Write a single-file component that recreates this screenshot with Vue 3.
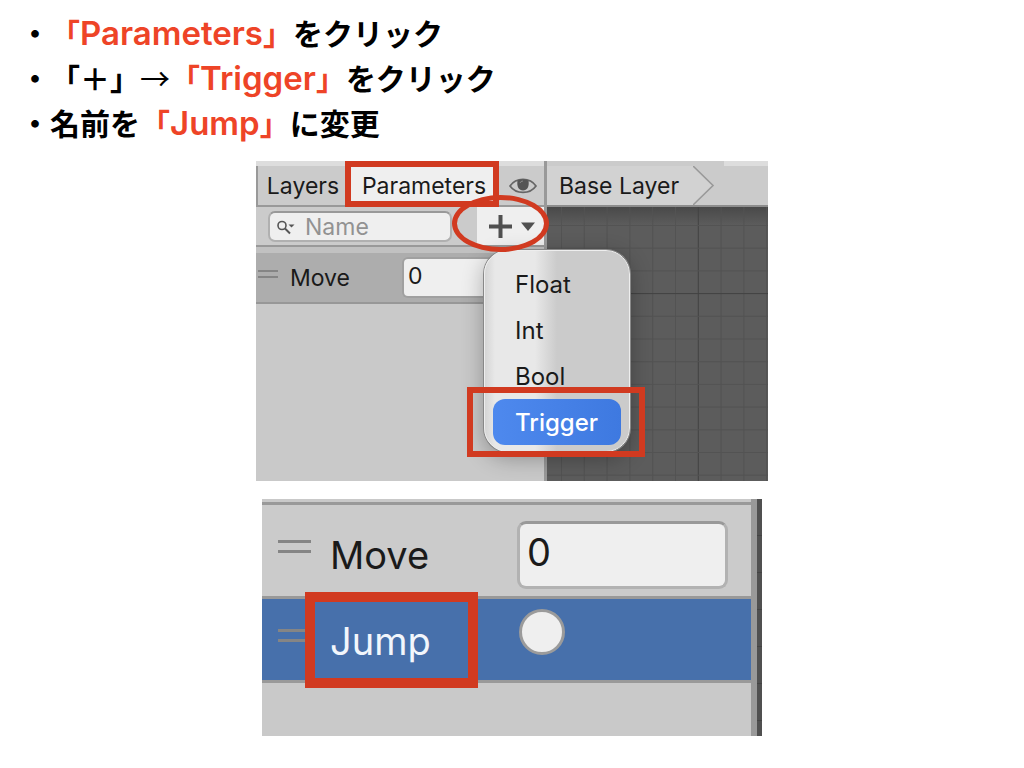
<script setup>
import { ref } from 'vue'

const filter = ref('')
const move = ref('0')
const moveLarge = ref('0')
const jump = ref(false)
const types = ['Float', 'Int', 'Bool', 'Trigger']
const columns = Array.from({ length: 10 }, (_, i) => ({ at: 14.5 + i * 22.8, major: i === 6 }))
const rows = Array.from({ length: 12 }, (_, i) => ({ at: 18.5 + i * 22.7, major: i === 3 }))
</script>

<template>
  <main class="slide">
    <ul class="steps">
      <li>・<em>「<b>Parameters</b>」</em>をクリック</li>
      <li>・「＋」<span class="arrow">→</span><em>「<b>Trigger</b>」</em>をクリック</li>
      <li>・名前を<em>「<b>Jump</b>」</em>に変更</li>
    </ul>

    <section class="editor">
      <div class="side">
        <div class="strip"></div>
        <div class="tabs">
          <button class="tab" type="button">Layers</button>
          <button class="tab active" type="button">Parameters</button>
          <button class="eye" type="button" aria-label="Visibility">
            <svg width="28" height="18" viewBox="0 0 28 18">
              <path d="M1 9C7 .2 21 .2 27 9C21 17.500 7 17.500 1 9Z" fill="none" stroke="#666" stroke-width="1.700" />
              <path d="M8.500 3.500C11 2 17 2 19.500 3.500C20.500 10 18 13.500 14 13.500S7.500 10 8.500 3.500Z" fill="#555" />
              <path d="M11 6Q11.500 4 14 4" fill="none" stroke="#888" stroke-width="1" />
            </svg>
          </button>
        </div>
        <div class="tools">
          <label class="search">
            <svg width="20" height="16" viewBox="0 0 20 16" fill="none" stroke="#555" stroke-width="1.600">
              <circle cx="6" cy="6.500" r="4" />
              <path d="M9 9.500l5 5" stroke-width="2" />
              <path d="M12.500 5.500h6l-3 3z" fill="#555" stroke="none" />
            </svg>
            <input v-model="filter" type="text" placeholder="Name" aria-label="Name" />
          </label>
          <button class="add" type="button" aria-label="Add parameter">
            <svg width="66" height="38" viewBox="0 0 66 38">
              <path d="M12 19.500h23M23.500 8v23" stroke="#505050" stroke-width="4" />
              <path d="M44 15.500h14l-7 8.500z" fill="#505050" />
            </svg>
          </button>
        </div>
        <div class="row">
          <span class="grip"></span>
          <label for="move-value">Move</label>
          <input id="move-value" v-model="move" type="text" />
        </div>
      </div>
      <div class="graph">
        <div class="crumbs">
          <a href="#">Base Layer</a>
          <svg width="22" height="40" viewBox="0 0 22 40">
            <path d="M0 0L20 19.500L0 39V0Z" fill="#d2d2d2" />
            <path d="M0 0L20 19.500L0 39" fill="none" stroke="#999" stroke-width="1.600" />
          </svg>
        </div>
        <svg class="canvas" aria-hidden="true">
          <line v-for="c in columns" :key="c.at" :x1="c.at" :x2="c.at" y1="0" y2="100%" :class="{ major: c.major }" />
          <line v-for="r in rows" :key="r.at" :y1="r.at" :y2="r.at" x1="0" x2="100%" :class="{ major: r.major }" />
        </svg>
      </div>

      <div class="menu" role="menu">
        <button v-for="t in types" :key="t" type="button" role="menuitem" :class="{ chosen: t === 'Trigger' }">{{ t }}</button>
      </div>
      <div class="mark mark-tab"></div>
      <div class="mark mark-add"></div>
      <div class="mark mark-trigger"></div>
    </section>

    <section class="result">
      <div class="list">
        <div class="item">
          <span class="grip"></span>
          <label for="move-large">Move</label>
          <input id="move-large" v-model="moveLarge" type="text" />
        </div>
        <div class="item selected">
          <span class="grip"></span>
          <label for="jump-value">Jump</label>
          <input id="jump-value" v-model="jump" type="radio" :value="true" />
        </div>
      </div>
      <div class="edge"></div>
      <div class="mark mark-jump"></div>
    </section>
  </main>
</template>

<style>
body {
  margin: 0;
  background: #fff;
}
</style>

<style scoped>
* {
  box-sizing: border-box;
}
button,
input {
  margin: 0;
  padding: 0;
  border: 0;
  background: none;
  color: inherit;
  font: inherit;
  outline: none;
}
svg {
  display: block;
}
.slide {
  display: flex;
  flex-direction: column;
  align-items: center;
  color: #1a1a1a;
  font-family: Inter, "Noto Sans CJK JP", sans-serif;
}
.steps {
  align-self: stretch;
  margin: 0;
  padding: 10px 20px 16px;
  list-style: none;
  color: #000;
  font: 700 30px/45px "Noto Sans CJK JP", sans-serif;
  text-spacing-trim: space-all;
}
.steps em {
  color: #ee4427;
  font-style: normal;
}
.steps b {
  font-family: Inter, sans-serif;
  font-size: 33px;
  font-weight: 600;
  line-height: 1;
}
.arrow {
  font-weight: 400;
}
.editor {
  position: relative;
  display: grid;
  grid-template-columns: 291px 1fr;
  width: 100%;
  max-width: 512px;
  min-height: 320px;
  overflow: hidden;
  background: #c9c9c9;
  font-size: 23px;
}
.side {
  border-right: 3px solid #999;
  background: #c9c9c9;
}
.strip {
  height: 5px;
  background: #ddd;
}
.tabs {
  display: flex;
  height: 41px;
  border-bottom: 2px solid #999;
  border-left: 2px solid #999;
  background: #cbcbcb;
}
.tab {
  width: 88px;
  padding-left: 2px;
}
.tab.active {
  width: 152px;
  padding-left: 4px;
  background: #efefef;
}
.eye {
  display: grid;
  flex: 1;
  place-items: center;
  padding-left: 4px;
}
.tools {
  display: flex;
  justify-content: space-between;
  height: 40px;
  padding-left: 12px;
  border-bottom: 2px solid #999;
  background: #cbcbcb;
}
.search {
  display: flex;
  align-items: center;
  gap: 9px;
  width: 184px;
  height: 31px;
  margin-top: 4px;
  padding-left: 6px;
  border: 2px solid #b0b0b0;
  border-top-color: #999;
  border-radius: 7px;
  background: #efefef;
}
.search input {
  flex: 1;
  min-width: 0;
}
.search input::placeholder {
  color: #929292;
  opacity: 1;
}
.add {
  width: 67px;
  background: #efefef;
}
.row {
  display: flex;
  align-items: center;
  height: 57px;
  border-top: 6px solid #c1c1c1;
  border-bottom: 2px solid #979797;
  background: #adadad;
}
.grip {
  width: 20px;
  height: 8px;
  margin: 0 12px 8px 2px;
  border-top: 2px solid #858585;
  border-bottom: 2px solid #858585;
}
.row label {
  width: 112px;
}
.row input {
  flex: 1;
  min-width: 0;
  height: 41px;
  padding: 0 0 4px 4px;
  border: 2px solid #a0a0a0;
  border-right: 0;
  border-radius: 6px 0 0 6px;
  background: #efefef;
}
.graph {
  display: flex;
  flex-direction: column;
  background: #5c5c5c;
}
.crumbs {
  display: flex;
  height: 46px;
  padding-top: 5px;
  border-bottom: 2px solid #8d8d8d;
  background: linear-gradient(#ddd, #ddd) 177px 0 / 100% 5px no-repeat, #cbcbcb;
}
.crumbs a {
  width: 146px;
  padding-left: 12px;
  background: #d2d2d2;
  color: inherit;
  line-height: 40px;
  text-decoration: none;
}
.canvas {
  flex: 1;
  width: 100%;
  background: linear-gradient(#494949, #5c5c5c 18px);
}
.canvas line {
  stroke: #535353;
  stroke-width: 1;
}
.canvas .major {
  stroke: #434343;
}
.menu {
  position: absolute;
  top: 89px;
  left: 228px;
  display: flex;
  flex-direction: column;
  width: 146px;
  padding: 10px 8px 6px;
  border: 1px solid #eee;
  border-radius: 24px;
  background: linear-gradient(90deg, #d5d5d5 0, #e8e8e8 10px, #e8e8e8 50px, #cbcbcb 72px, #cbcbcb);
  box-shadow: 0 0 0 1px #888, 0 6px 22px rgba(0, 0, 0, 0.3);
}
.menu button {
  height: 46px;
  padding-left: 22px;
  border-radius: 12px;
  font-size: 24px;
  text-align: left;
}
.menu .chosen {
  background: linear-gradient(90deg, #4e89ee, #3e79e0);
  color: #fff;
  font-weight: 500;
}
.mark {
  position: absolute;
  border: 6px solid #d13a20;
  pointer-events: none;
}
.mark-tab {
  top: 0;
  left: 89px;
  width: 154px;
  height: 46px;
}
.mark-add {
  top: 34px;
  left: 196px;
  width: 97px;
  height: 57px;
  border-width: 5px;
  border-radius: 50%;
}
.mark-trigger {
  top: 226px;
  left: 211px;
  width: 178px;
  height: 70px;
}
.result {
  position: relative;
  display: flex;
  width: 100%;
  max-width: 500px;
  min-height: 237px;
  margin-top: 18px;
  font-size: 38px;
}
.list {
  flex: 1;
  min-width: 0;
  padding-top: 3px;
  background: #c9c9c9;
}
.item {
  display: flex;
  align-items: center;
  height: 97px;
  border-top: 3px solid #999;
  border-bottom: 3px solid #999;
  background: #cbcbcb;
}
.item .grip {
  width: 33px;
  height: 13px;
  margin: 0 19px 8px 16px;
  border-width: 3px;
}
.item label {
  width: 187px;
  padding-top: 8px;
}
.item input[type="text"] {
  flex: 1;
  min-width: 0;
  height: 68px;
  margin: 8px 23px 0 0;
  padding: 0 7px 6px;
  border: 3px solid #b2b2b2;
  border-top-color: #999;
  border-radius: 9px;
  background: #efefef;
}
.item.selected {
  height: 84px;
  border-top: 0;
  background: #4770ab;
  color: #f2f6fc;
}
.item.selected label {
  padding-top: 2px;
}
.item input[type="radio"] {
  width: 46px;
  height: 46px;
  margin: 0 0 16px 2px;
  border: 3px solid #9b9b9b;
  border-radius: 50%;
  background: #efefef;
  appearance: none;
}
.edge {
  width: 11px;
  border-left: 6px solid #999;
  background: repeating-linear-gradient(#505050 0 36px, #434343 36px 37px);
}
.mark-jump {
  top: 93px;
  left: 43px;
  width: 173px;
  height: 96px;
  border-width: 10px;
}
</style>
